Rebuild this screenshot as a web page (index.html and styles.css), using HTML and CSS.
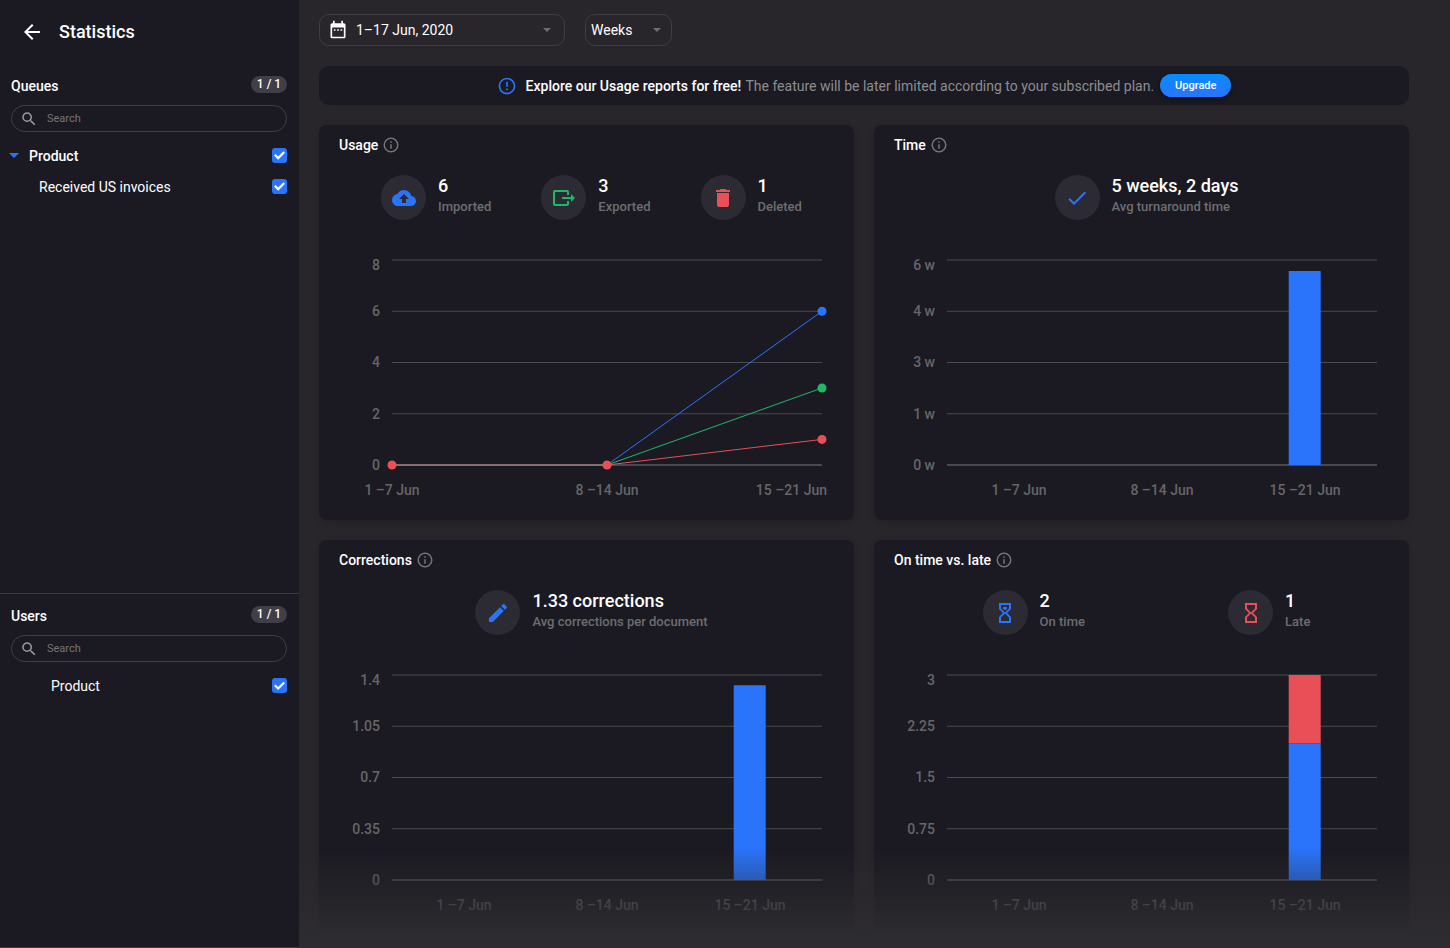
FILE: index.html
```html
<!DOCTYPE html>
<html lang="en">
<head>
    <meta charset="UTF-8">
    <meta name="viewport" content="width=device-width, initial-scale=1">
    <title>Statistics</title>
    <link rel="stylesheet" href="styles.css">
</head>
<body>

    <div class="layout">
        <aside class="sidebar">
            <header class="sidebar-header">
                <a href="#" class="back" aria-label="Back">
                    <svg width="24" height="24" viewBox="0 0 24 24"><path d="M20 11H7.83l5.59-5.59L12 4l-8 8 8 8 1.41-1.41L7.83 13H20v-2z"/></svg>
                </a>
                <h1>Statistics</h1>
            </header>

            <section class="panel">
                <div class="panel-title">
                    <h2>Queues</h2>
                    <span class="count">1 / 1</span>
                </div>
                <div class="search">
                    <svg width="18" height="18" viewBox="0 0 24 24"><path d="M15.5 14h-.79l-.28-.27A6.47 6.47 0 0 0 16 9.5 6.5 6.5 0 1 0 9.5 16c1.61 0 3.09-.59 4.23-1.57l.27.28v.79l5 4.99L20.49 19l-4.99-5zm-6 0C7.01 14 5 11.99 5 9.5S7.01 5 9.5 5 14 7.01 14 9.5 11.99 14 9.5 14z"/></svg>
                    <input type="text" placeholder="Search" aria-label="Search queues">
                </div>
                <div class="row group">
                    <button type="button" class="toggle" aria-label="Collapse Product">
                        <svg width="10" height="5" viewBox="0 0 10 5"><path d="M0 0h10L5 5z"/></svg>
                    </button>
                    <label for="queue-product">Product</label>
                    <input type="checkbox" id="queue-product" checked>
                </div>
                <div class="row queue">
                    <label for="queue-us">Received US invoices</label>
                    <input type="checkbox" id="queue-us" checked>
                </div>
            </section>

            <section class="panel">
                <div class="panel-title">
                    <h2>Users</h2>
                    <span class="count">1 / 1</span>
                </div>
                <div class="search">
                    <svg width="18" height="18" viewBox="0 0 24 24"><path d="M15.5 14h-.79l-.28-.27A6.47 6.47 0 0 0 16 9.5 6.5 6.5 0 1 0 9.5 16c1.61 0 3.09-.59 4.23-1.57l.27.28v.79l5 4.99L20.49 19l-4.99-5zm-6 0C7.01 14 5 11.99 5 9.5S7.01 5 9.5 5 14 7.01 14 9.5 11.99 14 9.5 14z"/></svg>
                    <input type="text" placeholder="Search" aria-label="Search users">
                </div>
                <div class="row user">
                    <label for="user-product">Product</label>
                    <input type="checkbox" id="user-product" checked>
                </div>
            </section>
        </aside>

        <main class="content">
            <div class="filters">
                <button type="button" class="date-range">
                    <svg class="calendar" width="20" height="20" viewBox="0 0 24 24"><path d="M9 11H7v2h2v-2zm4 0h-2v2h2v-2zm4 0h-2v2h2v-2zm2-7h-1V1h-2v3H8V1H6v3H5c-1.11 0-1.99.9-1.99 2L3 20a2 2 0 0 0 2 2h14c1.1 0 2-.9 2-2V6c0-1.1-.9-2-2-2zm0 16H5V9h14v11z"/></svg>
                    <span>1–17 Jun, 2020</span>
                    <svg class="caret" width="8" height="4" viewBox="0 0 8 4"><path d="M0 0h8L4 4z"/></svg>
                </button>
                <div class="period">
                    <select aria-label="Period">
                        <option>Days</option>
                        <option selected>Weeks</option>
                        <option>Months</option>
                    </select>
                    <svg class="caret" width="8" height="4" viewBox="0 0 8 4"><path d="M0 0h8L4 4z"/></svg>
                </div>
            </div>

            <div class="banner">
                <svg width="20" height="20" viewBox="0 0 24 24"><path d="M11 15h2v2h-2v-2zm0-8h2v6h-2V7zm.99-5C6.47 2 2 6.48 2 12s4.47 10 9.99 10C17.52 22 22 17.52 22 12S17.52 2 11.99 2zM12 20c-4.42 0-8-3.58-8-8s3.58-8 8-8 8 3.58 8 8-3.58 8-8 8z"/></svg>
                <p><strong>Explore our Usage reports for free!</strong> The feature will be later limited according to your subscribed plan.</p>
                <button type="button" class="upgrade">Upgrade</button>
            </div>

            <div class="cards">
                <section class="card">
                    <h3>Usage <svg class="info" width="18" height="18" viewBox="0 0 24 24"><path d="M11 7h2v2h-2zm0 4h2v6h-2zm1-9a10 10 0 1 0 0 20 10 10 0 0 0 0-20zm0 18c-4.41 0-8-3.59-8-8s3.59-8 8-8 8 3.59 8 8-3.59 8-8 8z"/></svg></h3>
                    <div class="stats">
                        <div class="stat">
                            <span class="icon blue"><svg width="24" height="24" viewBox="0 0 24 24"><path d="M19.35 10.04A7.49 7.49 0 0 0 12 4C9.11 4 6.6 5.64 5.35 8.04A5.994 5.994 0 0 0 0 14c0 3.31 2.69 6 6 6h13c2.76 0 5-2.24 5-5 0-2.64-2.05-4.78-4.65-4.96zM14 13v4h-4v-4H7l5-5 5 5h-3z"/></svg></span>
                            <div><b>6</b><small>Imported</small></div>
                        </div>
                        <div class="stat">
                            <span class="icon green"><svg width="24" height="24" viewBox="0 0 24 24"><path d="M17 9V6a2 2 0 0 0-2-2H3a2 2 0 0 0-2 2v12a2 2 0 0 0 2 2h12a2 2 0 0 0 2-2v-3h-2v3H3V6h12v3z"/><path d="M10 11h9V8l4 4-4 4v-3h-9z"/></svg></span>
                            <div><b>3</b><small>Exported</small></div>
                        </div>
                        <div class="stat">
                            <span class="icon red"><svg width="24" height="24" viewBox="0 0 24 24"><path d="M6 19a2 2 0 0 0 2 2h8a2 2 0 0 0 2-2V7H6v12zM19 4h-3.5l-1-1h-5l-1 1H5v2h14V4z"/></svg></span>
                            <div><b>1</b><small>Deleted</small></div>
                        </div>
                    </div>
                    <svg class="chart" viewBox="0 0 495 260">
                        <path class="grid" d="M53 20H483M53 71.25H483M53 122.5H483M53 173.75H483"/>
                        <path class="axis" d="M53 225H483"/>
                        <g class="y-labels">
                            <text x="41" y="30">8</text>
                            <text x="41" y="76">6</text>
                            <text x="41" y="127">4</text>
                            <text x="41" y="179">2</text>
                            <text x="41" y="230">0</text>
                        </g>
                        <g class="x-labels">
                            <text x="53" y="255">1 –7 Jun</text>
                            <text x="268" y="255">8 –14 Jun</text>
                            <text x="488" y="255" class="last">15 –21 Jun</text>
                        </g>
                        <polyline class="line stroke-blue" points="53,225 268,225 483,71.25"/>
                        <polyline class="line stroke-green" points="53,225 268,225 483,148"/>
                        <polyline class="line stroke-red" points="53,225 268,225 483,199.4"/>
                        <circle class="fill-blue" cx="483" cy="71.25" r="4.5"/>
                        <circle class="fill-green" cx="483" cy="148" r="4.5"/>
                        <circle class="fill-red" cx="483" cy="199.4" r="4.5"/>
                        <circle class="fill-red" cx="53" cy="225" r="4.5"/>
                        <circle class="fill-red" cx="268" cy="225" r="4.5"/>
                    </svg>
                </section>

                <section class="card">
                    <h3>Time <svg class="info" width="18" height="18" viewBox="0 0 24 24"><path d="M11 7h2v2h-2zm0 4h2v6h-2zm1-9a10 10 0 1 0 0 20 10 10 0 0 0 0-20zm0 18c-4.41 0-8-3.59-8-8s3.59-8 8-8 8 3.59 8 8-3.59 8-8 8z"/></svg></h3>
                    <div class="stats">
                        <div class="stat">
                            <span class="icon blue"><svg width="24" height="24" viewBox="0 0 24 24"><path d="M9 16.17L4.83 12l-1.42 1.41L9 19 21 7l-1.41-1.41z"/></svg></span>
                            <div><b>5 weeks, 2 days</b><small>Avg turnaround time</small></div>
                        </div>
                    </div>
                    <svg class="chart" viewBox="0 0 495 260">
                        <path class="grid" d="M53 20H483M53 71.25H483M53 122.5H483M53 173.75H483"/>
                        <path class="axis" d="M53 225H483"/>
                        <g class="y-labels">
                            <text x="41" y="30">6 w</text>
                            <text x="41" y="76">4 w</text>
                            <text x="41" y="127">3 w</text>
                            <text x="41" y="179">1 w</text>
                            <text x="41" y="230">0 w</text>
                        </g>
                        <g class="x-labels">
                            <text x="125" y="255">1 –7 Jun</text>
                            <text x="268" y="255">8 –14 Jun</text>
                            <text x="411" y="255">15 –21 Jun</text>
                        </g>
                        <rect class="fill-blue" x="394.7" y="31" width="32" height="194"/>
                    </svg>
                </section>

                <section class="card">
                    <h3>Corrections <svg class="info" width="18" height="18" viewBox="0 0 24 24"><path d="M11 7h2v2h-2zm0 4h2v6h-2zm1-9a10 10 0 1 0 0 20 10 10 0 0 0 0-20zm0 18c-4.41 0-8-3.59-8-8s3.59-8 8-8 8 3.59 8 8-3.59 8-8 8z"/></svg></h3>
                    <div class="stats">
                        <div class="stat">
                            <span class="icon blue"><svg width="24" height="24" viewBox="0 0 24 24"><path d="M3 17.25V21h3.75L17.81 9.94l-3.75-3.75L3 17.25zM20.71 7.04a1 1 0 0 0 0-1.41l-2.34-2.34a1 1 0 0 0-1.41 0l-1.83 1.83 3.75 3.75 1.83-1.83z"/></svg></span>
                            <div><b>1.33 corrections</b><small>Avg corrections per document</small></div>
                        </div>
                    </div>
                    <svg class="chart" viewBox="0 0 495 260">
                        <path class="grid" d="M53 20H483M53 71.25H483M53 122.5H483M53 173.75H483"/>
                        <path class="axis" d="M53 225H483"/>
                        <g class="y-labels">
                            <text x="41" y="30">1.4</text>
                            <text x="41" y="76">1.05</text>
                            <text x="41" y="127">0.7</text>
                            <text x="41" y="179">0.35</text>
                            <text x="41" y="230">0</text>
                        </g>
                        <g class="x-labels">
                            <text x="125" y="255">1 –7 Jun</text>
                            <text x="268" y="255">8 –14 Jun</text>
                            <text x="411" y="255">15 –21 Jun</text>
                        </g>
                        <rect class="fill-blue" x="394.7" y="30.25" width="32" height="194.75"/>
                    </svg>
                </section>

                <section class="card">
                    <h3>On time vs. late <svg class="info" width="18" height="18" viewBox="0 0 24 24"><path d="M11 7h2v2h-2zm0 4h2v6h-2zm1-9a10 10 0 1 0 0 20 10 10 0 0 0 0-20zm0 18c-4.41 0-8-3.59-8-8s3.59-8 8-8 8 3.59 8 8-3.59 8-8 8z"/></svg></h3>
                    <div class="stats">
                        <div class="stat">
                            <span class="icon blue"><svg width="24" height="24" viewBox="0 0 24 24"><path d="M6 2v6l4 4-4 4v6h12v-6l-4-4 4-4V2H6zm10 14.5V20H8v-3.5l4-4 4 4zm-4-5l-4-4V4h8v3.5l-4 4z"/><path d="M10 6h4v2l-2 1-2-1z"/></svg></span>
                            <div><b>2</b><small>On time</small></div>
                        </div>
                        <div class="stat">
                            <span class="icon red"><svg width="24" height="24" viewBox="0 0 24 24"><path d="M6 2v6l4 4-4 4v6h12v-6l-4-4 4-4V2H6zm10 14.5V20H8v-3.5l4-4 4 4zm-4-5l-4-4V4h8v3.5l-4 4z"/></svg></span>
                            <div><b>1</b><small>Late</small></div>
                        </div>
                    </div>
                    <svg class="chart" viewBox="0 0 495 260">
                        <path class="grid" d="M53 20H483M53 71.25H483M53 122.5H483M53 173.75H483"/>
                        <path class="axis" d="M53 225H483"/>
                        <g class="y-labels">
                            <text x="41" y="30">3</text>
                            <text x="41" y="76">2.25</text>
                            <text x="41" y="127">1.5</text>
                            <text x="41" y="179">0.75</text>
                            <text x="41" y="230">0</text>
                        </g>
                        <g class="x-labels">
                            <text x="125" y="255">1 –7 Jun</text>
                            <text x="268" y="255">8 –14 Jun</text>
                            <text x="411" y="255">15 –21 Jun</text>
                        </g>
                        <rect class="fill-red" x="394.7" y="20" width="32" height="68.3"/>
                        <rect class="fill-blue" x="394.7" y="88.3" width="32" height="136.7"/>
                    </svg>
                </section>
            </div>
        </main>
        <div class="fade"></div>
    </div>

</body>
</html>
```

FILE: styles.css
```css
* {
    box-sizing: border-box;
}

body {
    margin: 0;
    background-color: #28252b;
    color: #fff;
    font-family: Roboto, "Liberation Sans", sans-serif;
    font-size: 14px;
    line-height: 20px;
}

h1, h2, h3, p {
    margin: 0;
}

button, input, select {
    font-family: inherit;
    color: inherit;
}

svg {
    display: block;
    fill: currentColor;
    flex-shrink: 0;
}

.layout {
    display: flex;
    height: 100vh;
}

/* sidebar */
.sidebar {
    display: grid;
    grid-template-rows: 64px minmax(0, 3fr) minmax(0, 2fr);
    width: 299px;
    flex-shrink: 0;
    background-color: #1b1a22;
}

.sidebar-header {
    display: flex;
    align-items: center;
    gap: 15px;
    padding: 0 20px;
}

.back {
    color: #fff;
}

h1 {
    font-size: 18px;
    font-weight: 500;
}

.panel {
    padding: 12px 12px 0 11px;
    border-bottom: 1px solid #3b3942;
    overflow: auto;
}

.panel-title {
    display: flex;
    justify-content: space-between;
    align-items: flex-start;
    margin-bottom: 9px;
}

h2, h3 {
    font-size: 14px;
    font-weight: 500;
}

.count {
    width: 36px;
    border-radius: 9px;
    background-color: #403e47;
    font-size: 12px;
    font-weight: 500;
    line-height: 17px;
    text-align: center;
}

.search {
    display: flex;
    align-items: center;
    gap: 9px;
    height: 27px;
    padding: 0 8px;
    margin-bottom: 8px;
    border: 1px solid #403e47;
    border-radius: 14px;
    color: #9a9a9c;
}

.search input {
    flex: 1;
    min-width: 0;
    padding: 0;
    border: none;
    outline: none;
    background: none;
    font-size: 11px;
    color: #fff;
}

.search input::placeholder {
    color: #757577;
}

.row {
    display: flex;
    align-items: center;
    height: 31px;
}

.row label {
    flex: 1;
}

.group {
    font-weight: 500;
}

.toggle {
    width: 18px;
    padding: 0;
    border: none;
    background: none;
    color: #2a74fb;
    cursor: pointer;
}

.toggle svg {
    margin-left: -2px;
}

.queue {
    padding-left: 28px;
}

.user {
    padding-left: 40px;
}

.row input {
    appearance: none;
    display: grid;
    place-items: center;
    width: 15px;
    height: 15px;
    margin: 0;
    border-radius: 3px;
    background-color: #403e47;
}

.row input:checked {
    background-color: #2a74fb;
}

.row input:checked::before {
    content: "";
    width: 11px;
    height: 9px;
    background-color: #fff;
    clip-path: polygon(0 50%, 14% 34%, 38% 62%, 86% 4%, 100% 20%, 38% 96%);
}

/* main */
.content {
    flex: 1;
    min-width: 0;
    padding: 14px 41px 0 20px;
    overflow: auto;
}

.filters {
    display: flex;
    gap: 20px;
    margin-bottom: 20px;
}

.date-range, .period select {
    height: 32px;
    border: 1px solid #403e44;
    border-radius: 10px;
    background: none;
    font-size: 14px;
    cursor: pointer;
}

.date-range {
    display: flex;
    align-items: center;
    gap: 8px;
    width: 246px;
    padding: 0 13px 0 8px;
}

.date-range span {
    flex: 1;
    text-align: left;
}

.caret {
    color: #6d6c70;
}

.period {
    position: relative;
}

.period select {
    appearance: none;
    width: 87px;
    padding: 0 5px;
    outline: none;
}

.period option {
    background-color: #28252b;
}

.period .caret {
    position: absolute;
    right: 11px;
    top: 14px;
    pointer-events: none;
}

.banner {
    display: flex;
    align-items: center;
    justify-content: center;
    min-height: 39px;
    margin-bottom: 20px;
    border-radius: 10px;
    background-color: #1b1a22;
    color: #2a74fb;
}

.banner p {
    margin: 0 6px 0 9px;
    color: #8d8d90;
}

.banner strong {
    margin-right: 1px;
    font-weight: 500;
    color: #fff;
}

.upgrade {
    height: 23px;
    padding: 0 15px;
    border: none;
    border-radius: 12px;
    background: linear-gradient(#058cff, #2a74fb);
    box-shadow: 0 2px 5px rgba(0, 0, 0, 0.5);
    color: #fff;
    font-size: 11px;
    font-weight: 500;
    cursor: pointer;
}

.cards {
    display: grid;
    grid-template-columns: 1fr 1fr;
    gap: 20px;
}

.card {
    padding: 10px 20px 20px;
    border-radius: 8px;
    background-color: #1b1a22;
    box-shadow: 0 2px 6px rgba(0, 0, 0, 0.15);
}

.card h3 {
    display: flex;
    align-items: center;
    gap: 4px;
}

.info {
    color: #757577;
}

.stats {
    display: flex;
    justify-content: space-around;
    padding: 20px 12px;
}

.stat {
    display: flex;
    align-items: flex-start;
    gap: 12px;
    margin-left: 10px;
}

.icon {
    display: grid;
    place-items: center;
    width: 45px;
    height: 45px;
    border-radius: 50%;
    background-color: #2c2a33;
}

.stat b {
    display: block;
    font-size: 18px;
    font-weight: 500;
    line-height: 22px;
}

.stat small {
    display: block;
    font-size: 13px;
    font-weight: 500;
    color: #6d6d70;
}

.blue {
    color: #2a74fb;
}

.green {
    color: #20b768;
}

.red {
    color: #e94f57;
}

/* charts */
.chart {
    width: 100%;
    height: auto;
}

.chart text {
    fill: #666668;
    font-size: 14px;
    font-weight: 500;
}

.y-labels, .x-labels .last {
    text-anchor: end;
}

.x-labels {
    text-anchor: middle;
}

.grid {
    stroke: #4b4a4f;
}

.axis {
    stroke: #77767a;
}

.line {
    fill: none;
}

.stroke-blue {
    stroke: #2a74fb;
}

.stroke-green {
    stroke: #20b768;
}

.stroke-red {
    stroke: #e94f57;
}

.fill-blue {
    fill: #2a74fb;
}

.fill-green {
    fill: #20b768;
}

.fill-red {
    fill: #e94f57;
}

/* fade at the bottom of the scrolling area */
.fade {
    position: fixed;
    left: 299px;
    right: 0;
    bottom: 0;
    height: 100px;
    background: linear-gradient(rgba(45, 44, 48, 0), #2d2c30 90%);
    pointer-events: none;
}
```
